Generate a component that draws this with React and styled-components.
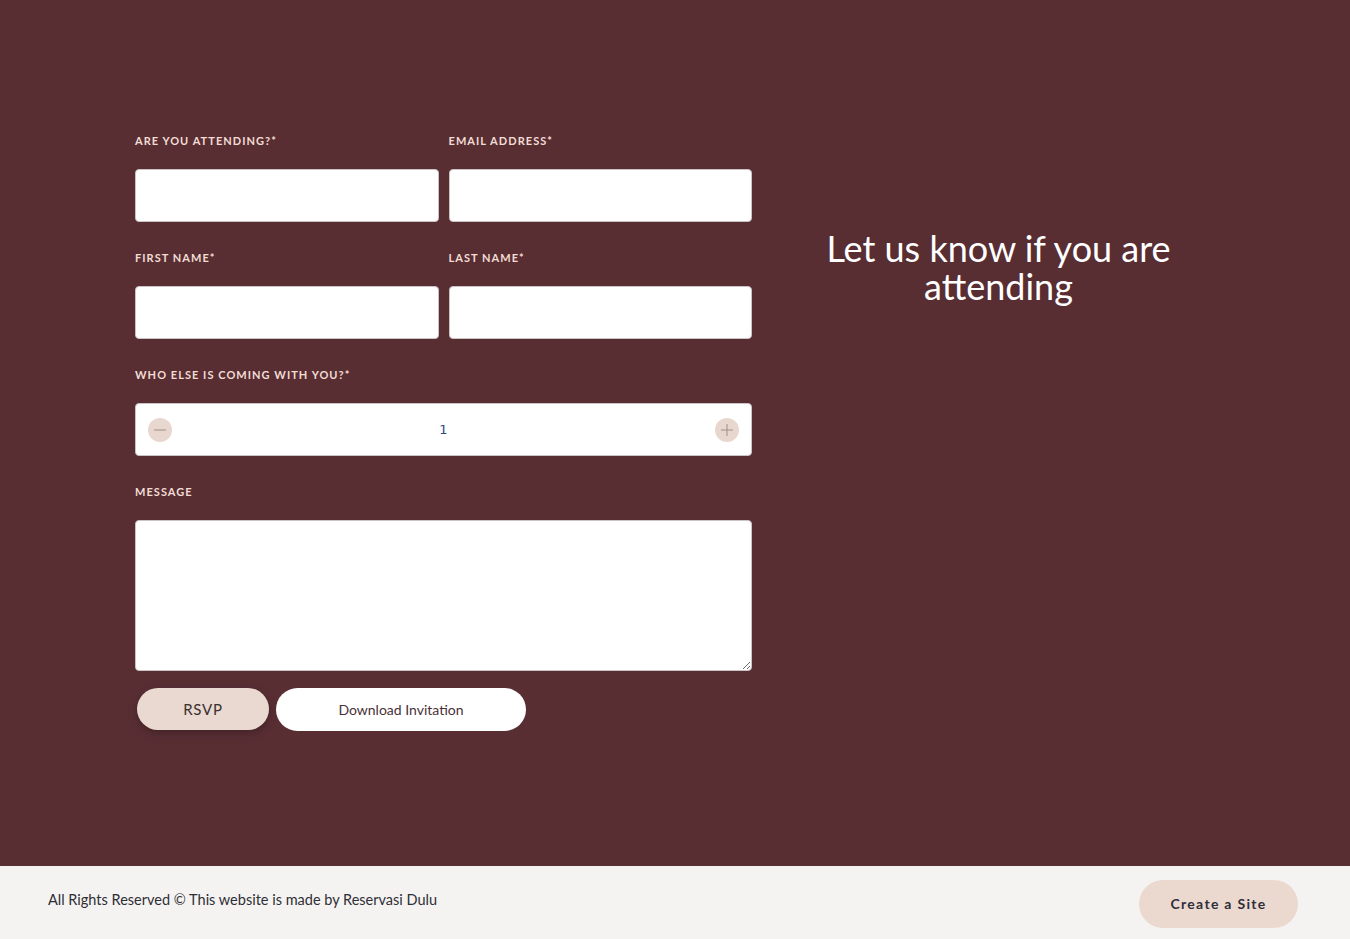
import React, { useState } from "react";
import styled, { createGlobalStyle } from "styled-components";

const GlobalStyle = createGlobalStyle`
  * { box-sizing: border-box; }
  html, body { margin: 0; padding: 0; }
  body {
    font-family: "Lato", "Noto Sans", sans-serif;
    background: #582e33;
  }
`;

function Field({ label, wide, children }) {
  return (
    <FieldBox wide={wide}>
      <Label>{label}</Label>
      {children}
    </FieldBox>
  );
}

function App() {
  const [guests, setGuests] = useState(1);

  return (
    <Page>
      <GlobalStyle />
      <Main>
        <Container>
          <Form>
            <Field label="Are you attending?*">
              <Input />
            </Field>
            <Field label="Email Address*">
              <Input />
            </Field>
            <Field label="First Name*">
              <Input />
            </Field>
            <Field label="Last Name*">
              <Input />
            </Field>
            <Field label="Who else is coming with you?*" wide>
              <Stepper>
                <RoundBtn onClick={() => setGuests(Math.max(1, guests - 1))}>
                  <svg width="14" height="14" viewBox="0 0 14 14">
                    <path d="M1 7h12" stroke="#a08f8a" strokeWidth="1" />
                  </svg>
                </RoundBtn>
                <Count>{guests}</Count>
                <RoundBtn onClick={() => setGuests(guests + 1)}>
                  <svg width="14" height="14" viewBox="0 0 14 14">
                    <path d="M1 7h12M7 1v12" stroke="#a08f8a" strokeWidth="1" />
                  </svg>
                </RoundBtn>
              </Stepper>
            </Field>
            <Field label="Message" wide>
              <TextArea />
            </Field>
            <Buttons>
              <RsvpButton>RSVP</RsvpButton>
              <DownloadButton>Download Invitation</DownloadButton>
            </Buttons>
          </Form>
          <Side>
            <Heading>Let us know if you are attending</Heading>
          </Side>
        </Container>
      </Main>
      <Footer>
        <FooterText>All Rights Reserved © This website is made by Reservasi Dulu</FooterText>
        <CreateButton>Create a Site</CreateButton>
      </Footer>
    </Page>
  );
}

const Page = styled.div`
  min-height: 939px;
  display: flex;
  flex-direction: column;
`;

const Main = styled.main`
  flex: 1;
  background: #582e33;
  padding: 134px 0 0 135px;
`;

const Container = styled.div`
  display: grid;
  grid-template-columns: 617px 493px;
  align-items: start;
`;

const Form = styled.form`
  display: grid;
  grid-template-columns: 1fr 1fr;
  column-gap: 10px;
  row-gap: 29px;
`;

const FieldBox = styled.div`
  display: flex;
  flex-direction: column;
  gap: 21px;
  grid-column: ${(p) => (p.wide ? "1 / -1" : "auto")};
`;

const Label = styled.label`
  font-size: 11px;
  font-weight: 700;
  letter-spacing: 1.05px;
  text-transform: uppercase;
  color: #f2dcd3;
  line-height: 14px;
`;

const Input = styled.input`
  height: 53px;
  width: 100%;
  border: 1px solid #c9c3c6;
  border-radius: 4px;
  background: #fff;
  padding: 0 14px;
  font-family: inherit;
  font-size: 14px;
  outline: none;
`;

const Stepper = styled.div`
  height: 53px;
  background: #fff;
  border: 1px solid #c9c3c6;
  border-radius: 4px;
  display: flex;
  align-items: center;
  justify-content: space-between;
  padding: 0 12px;
`;

const RoundBtn = styled.button`
  width: 24px;
  height: 24px;
  border-radius: 50%;
  border: none;
  background: #e8d7cf;
  display: flex;
  align-items: center;
  justify-content: center;
  padding: 0;
  cursor: pointer;
`;

const Count = styled.span`
  font-family: "DejaVu Sans", sans-serif;
  font-size: 13px;
  color: #2e4a7e;
`;

const TextArea = styled.textarea`
  height: 151px;
  width: 100%;
  border: 1px solid #c9c3c6;
  border-radius: 4px;
  background: #fff;
  padding: 12px 14px;
  font-family: inherit;
  font-size: 14px;
  resize: vertical;
  outline: none;
  display: block;
`;

const Buttons = styled.div`
  grid-column: 1 / -1;
  display: flex;
  gap: 7px;
  margin-top: -12px;
  padding-left: 2px;
`;

const RsvpButton = styled.button`
  width: 132px;
  height: 42px;
  border: none;
  border-radius: 21px;
  background: #ead9d0;
  color: #3b2f31;
  font-family: "Lato", sans-serif;
  font-size: 15px;
  letter-spacing: 0.8px;
  box-shadow: 0 3px 8px rgba(0, 0, 0, 0.25);
  cursor: pointer;
`;

const DownloadButton = styled.button`
  width: 250px;
  height: 43px;
  border: none;
  border-radius: 22px;
  background: #fff;
  color: #4a3038;
  font-family: "Lato", sans-serif;
  font-size: 14px;
  cursor: pointer;
`;

const Side = styled.div`
  display: flex;
  justify-content: center;
  padding-top: 95px;
`;

const Heading = styled.h2`
  margin: 0;
  width: 380px;
  text-align: center;
  font-family: "Lato", sans-serif;
  font-weight: 400;
  font-size: 36px;
  line-height: 38px;
  color: #fff;
`;

const Footer = styled.footer`
  height: 73px;
  background: #f5f3f1;
  display: flex;
  align-items: center;
  justify-content: space-between;
  padding: 0 52px 0 48px;
`;

const FooterText = styled.p`
  margin: 0;
  font-size: 14.5px;
  color: #2e2e36;
  margin-top: -6px;
`;

const CreateButton = styled.button`
  width: 159px;
  height: 48px;
  border: none;
  border-radius: 24px;
  background: #ebd9d0;
  color: #2e2e3a;
  font-family: "Lato", sans-serif;
  font-weight: 700;
  font-size: 14px;
  letter-spacing: 1.3px;
  margin-top: 2px;
  cursor: pointer;
`;

export default App;
